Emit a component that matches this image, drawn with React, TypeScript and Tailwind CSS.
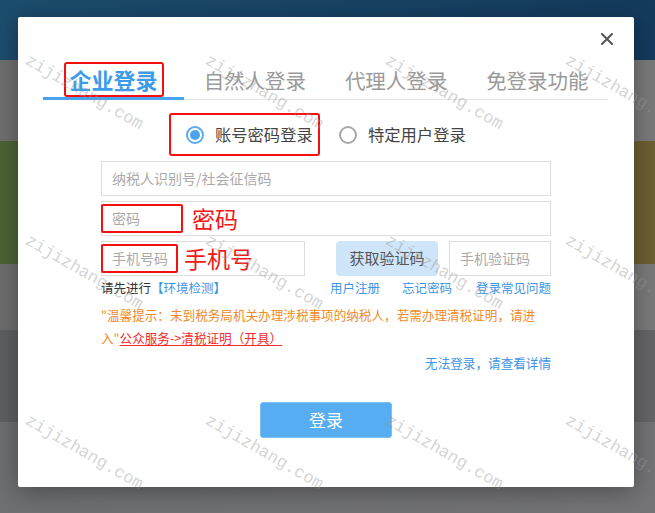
const font = { fontFamily: '"Noto Sans CJK SC", "Noto Sans", sans-serif' };

const tabs = ["企业登录", "自然人登录", "代理人登录", "免登录功能"];

const marks = [
  [31, 52], [211, 52], [391, 52], [571, 52],
  [31, 232], [211, 232], [391, 232], [571, 232],
  [31, 412], [211, 412], [391, 412], [571, 412],
];

export default function App() {
  return (
    <div className="relative h-[513px] w-[655px] overflow-hidden" style={font}>
      {/* page behind the overlay */}
      <div className="flex flex-col">
        <div className="h-[60px] bg-gradient-to-r from-[#1c4d6e] to-[#143a5d]" />
        <div className="h-[81px] bg-gradient-to-r from-[#6f6f6f] to-[#7a7a7a]" />
        <div className="h-[123px] bg-gradient-to-r from-[#4c6334] to-[#6e5f34]" />
        <div className="h-[66px] bg-gradient-to-r from-[#6d6d6d] to-[#7a7a7a]" />
        <div className="h-[92px] bg-gradient-to-r from-[#5e5f61] to-[#656568]" />
        <div className="h-[91px] bg-gradient-to-r from-[#6e6f72] to-[#747477]" />
      </div>

      {/* dialog */}
      <div className="absolute left-[18px] top-[17px] flex h-[470px] w-[616px] flex-col rounded-[2px] bg-white shadow-[0_4px_24px_rgba(0,0,0,0.35)]">
        <div className="flex h-[45px] justify-end pr-[21px] pt-[16px]">
          <svg width="12" height="12" viewBox="0 0 12 12">
            <path d="M1 1L11 11M11 1L1 11" stroke="#555" strokeWidth="2" strokeLinecap="round" />
          </svg>
        </div>

        {/* tabs */}
        <div className="ml-[25px] flex h-[38px] w-[565px] border-b border-[#e3e3e3]">
          {tabs.map((t, i) =>
            i === 0 ? (
              <div key={t} className="-mb-px flex w-[142px] justify-center border-b-[3px] border-[#4aa3ee]">
                <span className="h-[35px] rounded-[3px] border-2 border-[#f50f0f] px-[4px] text-[22px] font-bold leading-[30px] text-[#3d9bea]">{t}</span>
              </div>
            ) : (
              <div key={t} className="flex w-[142px] justify-center pt-[4px] text-[20.5px] leading-[28px] text-[#9a9a9a]">{t}</div>
            )
          )}
        </div>

        {/* login type */}
        <div className="ml-[151px] mt-[13px] flex items-center">
          <div className="flex h-[43px] w-[151px] items-center rounded-[3px] border-2 border-[#f50f0f] pl-[15px]">
            <span className="flex h-[18px] w-[18px] items-center justify-center rounded-full border-2 border-[#5aaaf0]">
              <span className="h-[10px] w-[10px] rounded-full bg-[#4aa3f0]" />
            </span>
            <span className="ml-[11px] text-[16.3px] text-[#444]">账号密码登录</span>
          </div>
          <span className="ml-[19px] h-[18px] w-[18px] rounded-full border-2 border-[#a8a8a8]" />
          <span className="ml-[11px] text-[16.3px] text-[#444]">特定用户登录</span>
        </div>

        {/* form */}
        <div className="mx-[83px] mt-[5px] flex flex-col gap-[5px]">
          <div className="flex h-[35px] items-center border border-[#dedede] pl-[10px] text-[14px] text-[#aaa]">纳税人识别号/社会征信码</div>
          <div className="flex h-[35px] items-center border border-[#dedede]">
            <div className="-ml-px flex h-[29px] w-[82px] items-center rounded-[2px] border-2 border-[#f50f0f] pl-[9px] text-[14px] text-[#aaa]">密码</div>
            <span className="ml-[9px] text-[23px] leading-none text-[#f21818]">密码</span>
          </div>
          <div className="flex h-[35px]">
            <div className="flex w-[204px] items-center border border-[#dedede]">
              <div className="-ml-px flex h-[29px] w-[77px] items-center rounded-[2px] border-2 border-[#f50f0f] pl-[9px] text-[14px] text-[#aaa]">手机号码</div>
              <span className="ml-[6px] text-[23px] leading-none text-[#f21818]">手机号</span>
            </div>
            <div className="ml-[31px] flex w-[102px] items-center justify-center rounded-[4px] bg-[#cfe5fa] text-[15px] text-[#555]">获取验证码</div>
            <div className="ml-[11px] flex w-[102px] items-center border border-[#dedede] pl-[10px] text-[14px] text-[#aaa]">手机验证码</div>
          </div>
        </div>

        {/* links */}
        <div className="mx-[83px] mt-[3px] flex h-[18px] items-center text-[12.5px] leading-[18px]">
          <span className="text-[#333]">请先进行</span>
          <span className="text-[#3d95e6]">【环境检测】</span>
          <span className="ml-auto text-[#3d95e6]">用户注册</span>
          <span className="ml-[22px] text-[#3d95e6]">忘记密码</span>
          <span className="ml-[24px] text-[#3d95e6]">登录常见问题</span>
        </div>

        <div className="mx-[83px] mt-[6px] text-[12.6px] leading-[23px] text-[#f08a2a]">
          "温馨提示：未到税务局机关办理涉税事项的纳税人，若需办理清税证明，请进
          <br />
          入"<span className="text-[#f52a2a] underline underline-offset-2">公众服务-&gt;清税证明（开具）</span>
        </div>

        <div className="mx-[83px] mt-[5px] text-right text-[12.6px] leading-[18px] text-[#3d95e6]">无法登录，请查看详情</div>

        <div className="mt-[30px] flex justify-center">
          <button className="h-[36px] w-[132px] rounded-[3px] border border-[#7cc0f6] bg-[#56adf2] text-[17px] text-white">登录</button>
        </div>
      </div>

      {/* watermarks */}
      {marks.map(([x, y], i) => (
        <span
          key={i}
          className="pointer-events-none absolute origin-top-left rotate-[30deg] whitespace-nowrap text-[17px] leading-none text-[rgba(150,150,150,0.42)]"
          style={{ left: x, top: y, fontFamily: '"Liberation Mono", monospace' }}
        >
          zijizhang.com
        </span>
      ))}
    </div>
  );
}
